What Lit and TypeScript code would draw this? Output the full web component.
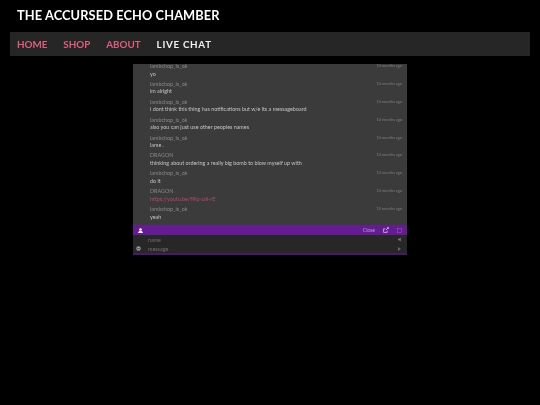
import { LitElement, html, css } from "lit";
import { customElement } from "lit/decorators.js";

const msgs: { n: string; t: string; link?: boolean }[] = [
  { n: "lambchop_is_ok", t: "yo" },
  { n: "lambchop_is_ok", t: "im alright" },
  { n: "lambchop_is_ok", t: "i dont think this thing has notifications but w/e its a messageboard" },
  { n: "lambchop_is_ok", t: "also you can just use other peoples names" },
  { n: "lambchop_is_ok", t: "lame ." },
  { n: "DRAGON", t: "thinking about ordering a really big bomb to blow myself up with" },
  { n: "lambchop_is_ok", t: "do it" },
  { n: "DRAGON", t: "https://youtu.be/f9ip-zdi-rE", link: true },
  { n: "lambchop_is_ok", t: "yeah" },
];

@customElement("app-root")
export class AppRoot extends LitElement {
  static styles = css`
    :host { display: block; width: 540px; height: 405px; background: #000; overflow: hidden; font-family: "Lato", "Liberation Sans", sans-serif; }
    .title { height: 32px; box-sizing: border-box; padding: 8px 0 0 17px; color: #fff; font: 700 12.8px/14px "Lato", sans-serif; letter-spacing: 0.1px; filter: blur(0.3px); white-space: nowrap; }
    .nav { margin: 0 10px; height: 24px; background: #262626; display: flex; align-items: center; gap: 16px; padding: 0 7px; box-sizing: border-box; font: 700 9.8px "Lato", sans-serif; color: #dc5f80; filter: blur(0.25px); }
    .nav .on { color: #f0f0f0; letter-spacing: 0.7px; }
    .chat { width: 274px; height: 191px; margin: 8px auto 0; background: #3b3b3b; display: flex; flex-direction: column; overflow: hidden; }
    .list { height: 161px; flex: none; display: flex; flex-direction: column; justify-content: flex-end; overflow: hidden; padding-bottom: 2px; box-sizing: border-box; filter: blur(0.35px); }
    .row { height: 17.9px; flex: none; padding-left: 17px; padding-right: 5px; display: grid; grid-template-columns: 1fr auto; grid-template-rows: 7.6px 8px; font-size: 5.4px; line-height: 8px; }
    .name { color: #8a8a8a; }
    .time { color: #7f7f7f; font-size: 3.9px; line-height: 7px; }
    .text { color: #c4c4c4; grid-column: 1 / 3; white-space: nowrap; }
    .text.link { color: #b8476a; }
    .bar { height: 10px; flex: none; background: #651c92; display: flex; align-items: center; padding: 0 5px; gap: 8px; color: #b89fd0; font-size: 5px; filter: blur(0.25px); }
    .bar .sp { flex: 1; }
    .form { flex: 1; background: #272727; border-bottom: 2px solid #4a1a68; display: grid; grid-template-columns: 12px 1fr 9px; grid-auto-rows: 9px; align-items: center; padding-left: 3px; color: #6e6e6e; font-size: 5.4px; filter: blur(0.25px); }
    svg { display: block; }
  `;
  render() {
    return html`
      <div class="title">THE ACCURSED ECHO CHAMBER</div>
      <div class="nav"><span>HOME</span><span>SHOP</span><span>ABOUT</span><span class="on">LIVE CHAT</span></div>
      <div class="chat">
        <div class="list">
          ${msgs.map((m) => html`<div class="row">
            <span class="name">${m.n}</span><span class="time">10 months ago</span>
            <span class="text ${m.link ? "link" : ""}">${m.t}</span>
          </div>`)}
        </div>
        <div class="bar">
          <svg width="5" height="5" viewBox="0 0 10 10"><circle cx="5" cy="3" r="2.6" fill="#fff"/><path d="M0 10 Q1 5.5 5 5.5 Q9 5.5 10 10Z" fill="#fff"/></svg>
          <span class="sp"></span>
          <span>Close</span>
          <svg width="6" height="6" viewBox="0 0 10 10" fill="none" stroke="#d8c2e6" stroke-width="1.3"><path d="M7 6v3H1V3h3"/><path d="M5 5l4-4M6.5 1H9v2.5"/></svg>
          <svg width="5" height="5" viewBox="0 0 10 10" fill="none" stroke="#8f5bb0" stroke-width="1.2"><rect x="1" y="1" width="8" height="8"/></svg>
        </div>
        <div class="form">
          <span></span><span>name</span>
          <svg width="4" height="5" viewBox="0 0 10 10" fill="#777"><path d="M0 3h3l4-3v10L3 7H0z"/></svg>
          <svg width="5" height="5" viewBox="0 0 10 10"><circle cx="5" cy="5" r="4.5" fill="#999"/><rect x="2" y="4" width="6" height="1.2" fill="#333"/></svg>
          <span>message</span>
          <svg width="3" height="4" viewBox="0 0 6 8" fill="#666"><path d="M0 0l6 4-6 4z"/></svg>
        </div>
      </div>
    `;
  }
}
